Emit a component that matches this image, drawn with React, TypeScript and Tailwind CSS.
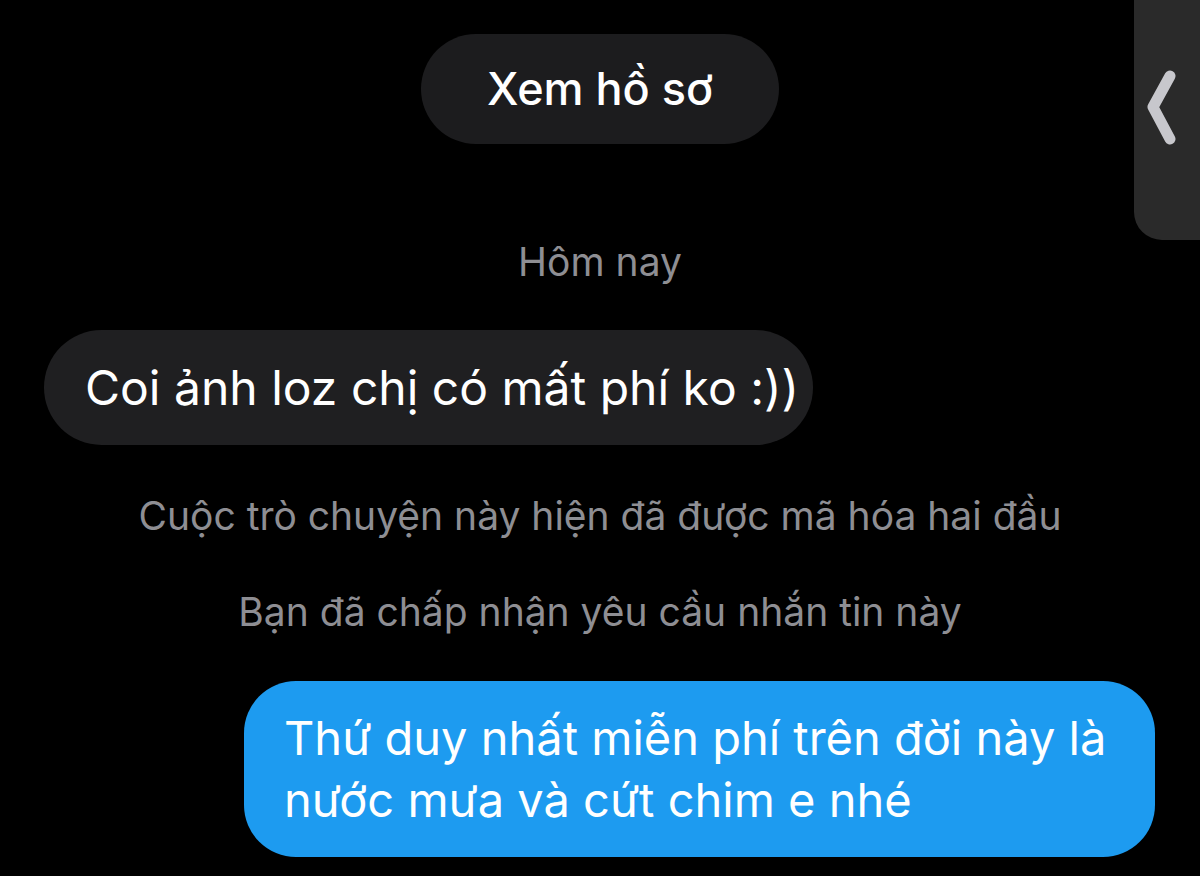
export default function App() {
  return (
    <div
      className="relative h-[876px] w-[1200px] overflow-hidden bg-black"
      style={{ fontFamily: 'Inter, "Noto Sans", sans-serif' }}
    >
      {/* side drawer handle */}
      <div className="absolute right-0 top-0 flex h-[240px] w-[66px] items-start justify-center rounded-bl-[28px] bg-[#2a2a2a] pt-[70px]">
        <svg width="40" height="80" viewBox="0 0 40 80" className="mr-[6px]">
          <path
            d="M26 6 L9 37 L26 69"
            fill="none"
            stroke="#c7c7cc"
            strokeWidth="11"
            strokeLinecap="round"
            strokeLinejoin="round"
          />
        </svg>
      </div>

      <div className="flex flex-col">
        <div className="mx-auto mt-[34px] flex h-[110px] w-[358px] items-center justify-center rounded-full bg-[#1c1c1e]">
          <span className="text-[45px] font-medium text-white">Xem hồ sơ</span>
        </div>

        <div className="mt-[96px] text-center text-[39px] leading-[44px] text-[#8e8e93]">Hôm nay</div>

        <div className="ml-[44px] mt-[46px] flex h-[115px] w-fit items-center rounded-full bg-[#1f1f21] pl-[41px] pr-[14px]">
          <span className="text-[48px] text-white">Coi ảnh loz chị có mất phí ko :))</span>
        </div>

        <div className="mt-[49px] text-center text-[39px] leading-[44px] text-[#8e8e93]">
          Cuộc trò chuyện này hiện đã được mã hóa hai đầu
        </div>
        <div className="mt-[52px] text-center text-[39px] leading-[44px] text-[#8e8e93]">
          Bạn đã chấp nhận yêu cầu nhắn tin này
        </div>

        <div className="ml-auto mr-[45px] mt-[47px] w-[911px] rounded-[52px] bg-[#1d9bf0] py-[26px] pl-[40px] pr-[40px]">
          <p className="text-[47px] leading-[62px] text-white">
            Thứ duy nhất miễn phí trên đời này là
            <br />
            nước mưa và cứt chim e nhé
          </p>
        </div>
      </div>
    </div>
  )
}
